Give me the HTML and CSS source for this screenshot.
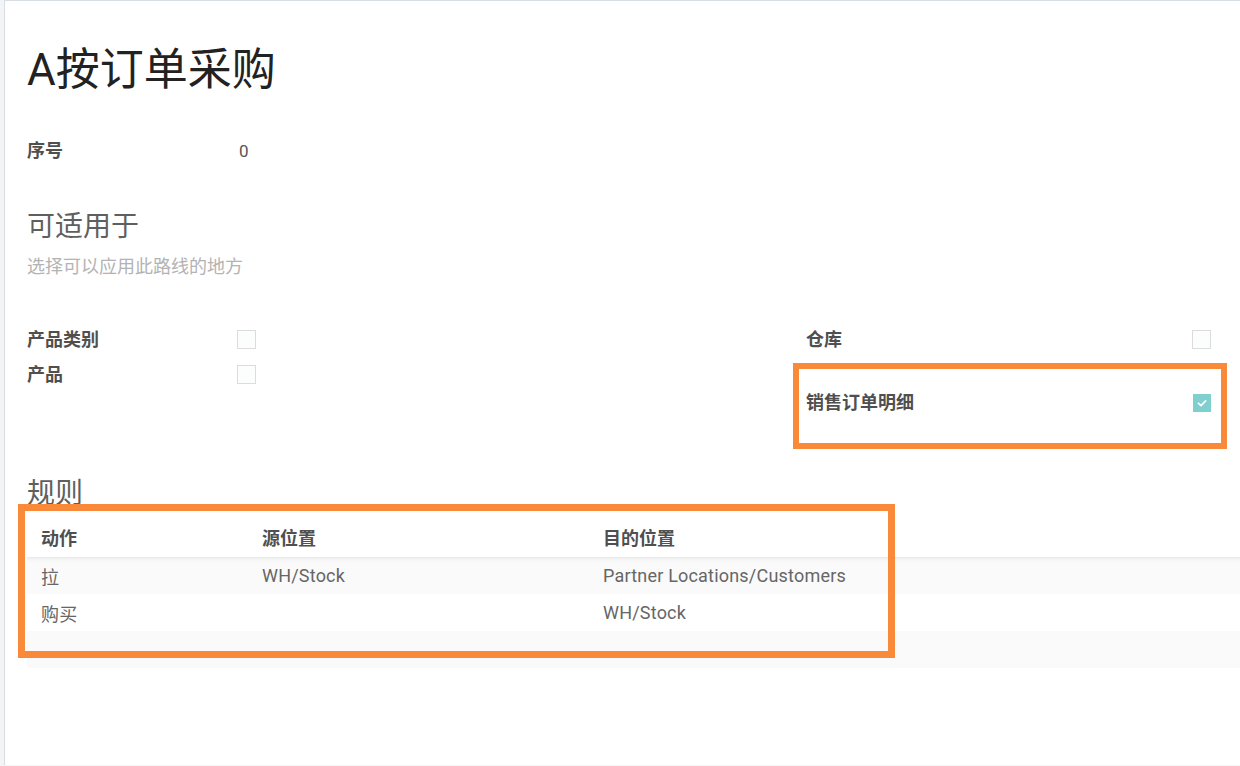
FILE: index.html
```html
<!DOCTYPE html>
<html lang="zh">
<head>
<meta charset="utf-8">
<title>A按订单采购</title>
<link rel="stylesheet" href="styles.css">
</head>
<body>
<div class="sheet">
  <h1 class="title">A按订单采购</h1>

  <div class="row seq">
    <div class="label">序号</div>
    <div class="value">0</div>
  </div>

  <h2 class="section">可适用于</h2>
  <div class="hint">选择可以应用此路线的地方</div>

  <div class="groups">
    <div class="group left">
      <div class="frow">
        <div class="label">产品类别</div>
        <span class="cb"></span>
      </div>
      <div class="frow">
        <div class="label">产品</div>
        <span class="cb"></span>
      </div>
    </div>
    <div class="group right">
      <div class="frow">
        <div class="label">仓库</div>
        <span class="cb"></span>
      </div>
      <div class="frow tall">
        <div class="label">销售订单明细</div>
        <span class="cb checked">
          <svg viewBox="0 0 18 18" width="18" height="18"><path d="M5.5 9.3 L8 11.6 L12.6 6.8" fill="none" stroke="#fff" stroke-width="1.8" stroke-linecap="round" stroke-linejoin="round"/></svg>
        </span>
      </div>
    </div>
  </div>

  <h2 class="section rules">规则</h2>
  <table class="rules-table">
    <colgroup><col class="c1"><col class="c2"><col></colgroup>
    <thead>
      <tr><th>动作</th><th>源位置</th><th>目的位置</th></tr>
    </thead>
    <tbody>
      <tr class="odd first"><td>拉</td><td>WH/Stock</td><td>Partner Locations/Customers</td></tr>
      <tr><td>购买</td><td></td><td>WH/Stock</td></tr>
      <tr class="odd"><td>&nbsp;</td><td></td><td></td></tr>
    </tbody>
  </table>
</div>

<div class="mark mark-line"></div>
<div class="mark mark-table"></div>
</body>
</html>
```
FILE: styles.css
```css
html, body {
  margin: 0;
  padding: 0;
}
body {
  position: relative;
  background: #f3f4f6;
  padding-left: 4px;
  height: 766px;
  overflow: hidden;
  font-family: Roboto, "Noto Sans CJK SC", sans-serif;
  color: #666;
}
.sheet {
  background: #fff;
  border-left: 1px solid #d8dde3;
  border-top: 1px solid #d8dde3;
  height: 765px;
  padding: 43px 0 0 22px;
  box-sizing: border-box;
}
.title {
  margin: 0;
  font-size: 44px;
  font-weight: 400;
  line-height: 52px;
  color: #222;
}
.row {
  display: flex;
  align-items: center;
  height: 24px;
}
.seq {
  margin-top: 43px;
}
.label {
  font-size: 18px;
  font-weight: 700;
  color: #4f4f4f;
  line-height: 24px;
}
.seq .label {
  width: 212px;
}
.value {
  font-size: 17px;
  color: #555;
}
.section {
  margin: 47px 0 0;
  font-size: 28px;
  font-weight: 400;
  line-height: 34px;
  color: #5f5f5f;
}
.hint {
  margin-top: 11px;
  font-size: 18px;
  line-height: 24px;
  color: #b3b3b3;
}
.groups {
  display: flex;
  margin-top: 43px;
  width: 1185px;
}
.group.left {
  width: 779px;
}
.group.right {
  width: 406px;
}
.frow {
  display: flex;
  align-items: center;
  height: 35px;
}
.left .frow .label {
  width: 210px;
}
.right .frow .label {
  width: 386px;
}
.frow.tall {
  margin-top: 28px;
}
.cb {
  display: inline-block;
  width: 17px;
  height: 17px;
  border: 1px solid #dcdcdc;
  background: #fcfdfd;
  box-sizing: content-box;
}
.cb.checked {
  width: 18px;
  height: 18px;
  border: none;
  background: #7fcfcf;
  margin-left: 1px;
}
.cb svg {
  display: block;
}
.section.rules {
  margin-top: 57px;
}
.rules-table {
  margin-top: 9px;
  width: 100%;
  border-collapse: collapse;
  font-size: 18px;
  letter-spacing: 0.2px;
}
.rules-table col.c1 {
  width: 221px;
}
.rules-table col.c2 {
  width: 341px;
}
.rules-table th {
  text-align: left;
  font-weight: 700;
  color: #4f4f4f;
  height: 37px;
  padding: 0 14px 3px;
  box-sizing: border-box;
  letter-spacing: 0;
}
.rules-table td {
  height: 37px;
  padding: 0 14px;
  color: #666;
}
.rules-table tr.odd td {
  background: #fafafa;
}
.rules-table tr.first td {
  background: linear-gradient(#e9e9e9, #f6f6f6 3px, #fafafa 6px);
}
.mark {
  position: absolute;
  border-style: solid;
  border-color: #f98a3a;
  box-sizing: border-box;
  pointer-events: none;
}
.mark-line {
  left: 793px;
  top: 363px;
  width: 434px;
  height: 86px;
  border-width: 6px;
}
.mark-table {
  left: 18px;
  top: 504px;
  width: 877px;
  height: 154px;
  border-width: 7px;
}
```
